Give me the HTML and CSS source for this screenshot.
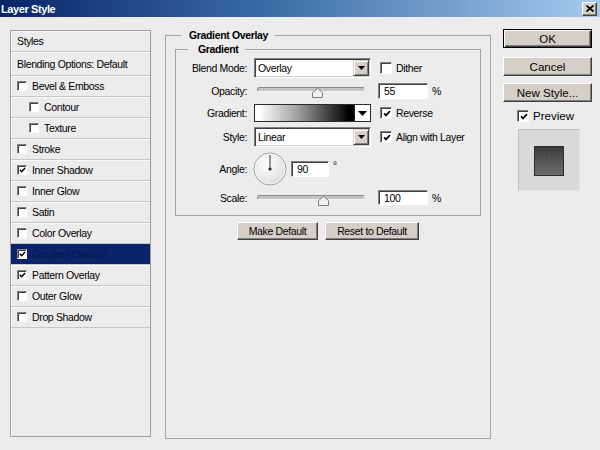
FILE: index.html
```html
<!DOCTYPE html>
<html>
<head>
<meta charset="utf-8">
<title>Layer Style</title>
<link rel="stylesheet" href="styles.css">
</head>
<body>
<div class="titlebar">
  <span class="title">Layer Style</span>
  <span class="close"><svg width="8" height="7" viewBox="0 0 8 7"><path d="M0.5 0.5 L7.5 6.5 M7.5 0.5 L0.5 6.5" stroke="#000" stroke-width="1.7"/></svg></span>
</div>
<div class="content">
  <div class="styles">
    <div class="row head">Styles</div>
    <div class="row blend">Blending Options: Default</div>
    <div class="row"><span class="cb"></span>Bevel &amp; Emboss</div>
    <div class="row sub"><span class="cb"></span>Contour</div>
    <div class="row sub"><span class="cb"></span>Texture</div>
    <div class="row"><span class="cb"></span>Stroke</div>
    <div class="row"><span class="cb"><svg class="tick" viewBox="0 0 8 8"><path d="M1 3.2 L3 5.4 L7 1.2"/></svg></span>Inner Shadow</div>
    <div class="row"><span class="cb"></span>Inner Glow</div>
    <div class="row"><span class="cb"></span>Satin</div>
    <div class="row"><span class="cb"></span>Color Overlay</div>
    <div class="row sel"><span class="cb"><svg class="tick" viewBox="0 0 8 8"><path d="M1 3.2 L3 5.4 L7 1.2"/></svg></span>Gradient Overlay</div>
    <div class="row"><span class="cb"><svg class="tick" viewBox="0 0 8 8"><path d="M1 3.2 L3 5.4 L7 1.2"/></svg></span>Pattern Overlay</div>
    <div class="row"><span class="cb"></span>Outer Glow</div>
    <div class="row"><span class="cb"></span>Drop Shadow</div>
  </div>

  <fieldset class="panel">
    <legend>Gradient Overlay</legend>
    <fieldset class="group">
      <legend>Gradient</legend>
      <div class="form">
        <div class="lbl">Blend Mode:</div>
        <div class="select"><span class="val">Overlay</span><span class="arrow"><svg width="7" height="4" viewBox="0 0 7 4"><path d="M0 0 H7 L3.5 4 Z" fill="#000"/></svg></span></div>
        <label class="check"><span class="cb big"></span>Dither</label>

        <div class="lbl">Opacity:</div>
        <div class="slider opacity"><div class="track"></div><svg class="thumb" width="11" height="10" viewBox="0 0 11 10"><path d="M5.5 0.5 L10.5 4.5 V9.5 H0.5 V4.5 Z" fill="#f2f2f2" stroke="#7c7c7c"/></svg></div>
        <div class="numwrap"><span class="input">55</span><span class="pct">%</span></div>

        <div class="lbl">Gradient:</div>
        <div class="gradient"><span class="ramp"></span><span class="garrow"><svg width="9" height="5" viewBox="0 0 9 5"><path d="M0 0 H9 L4.5 5 Z" fill="#000"/></svg></span></div>
        <label class="check"><span class="cb big"><svg class="tick" viewBox="0 0 8 8"><path d="M1 3.2 L3 5.4 L7 1.2"/></svg></span>Reverse</label>

        <div class="lbl">Style:</div>
        <div class="select"><span class="val">Linear</span><span class="arrow"><svg width="7" height="4" viewBox="0 0 7 4"><path d="M0 0 H7 L3.5 4 Z" fill="#000"/></svg></span></div>
        <label class="check"><span class="cb big"><svg class="tick" viewBox="0 0 8 8"><path d="M1 3.2 L3 5.4 L7 1.2"/></svg></span>Align with Layer</label>

        <div class="lbl">Angle:</div>
        <div class="angle">
          <svg class="dial" width="34" height="34" viewBox="0 0 34 34">
            <defs><radialGradient id="dg" cx="0.4" cy="0.35" r="0.7"><stop offset="0" stop-color="#ffffff"/><stop offset="1" stop-color="#dcdcdc"/></radialGradient></defs>
            <circle cx="17" cy="17" r="16" fill="url(#dg)" stroke="#9c9c9c"/>
            <circle cx="17" cy="17" r="15" fill="none" stroke="#ffffff" stroke-opacity="0.7"/>
            <path d="M17 3 V17" stroke="#333" stroke-width="1"/>
            <circle cx="17" cy="17" r="1.6" fill="#222"/>
          </svg>
          <span class="input small">90</span><span class="deg">°</span>
        </div>
        <div></div>

        <div class="lbl">Scale:</div>
        <div class="slider scale"><div class="track"></div><svg class="thumb" width="11" height="10" viewBox="0 0 11 10"><path d="M5.5 0.5 L10.5 4.5 V9.5 H0.5 V4.5 Z" fill="#f2f2f2" stroke="#7c7c7c"/></svg></div>
        <div class="numwrap"><span class="input">100</span><span class="pct">%</span></div>
      </div>
    </fieldset>
    <div class="btnrow">
      <button class="btn w81">Make Default</button>
      <button class="btn w94">Reset to Default</button>
    </div>
  </fieldset>

  <div class="side">
    <button class="btn big default">OK</button>
    <button class="btn big cancel">Cancel</button>
    <button class="btn big">New Style...</button>
    <label class="preview-check"><span class="cb big"><svg class="tick" viewBox="0 0 8 8"><path d="M1 3.2 L3 5.4 L7 1.2"/></svg></span>Preview</label>
    <div class="preview"><div class="swatch"></div></div>
  </div>
</div>
</body>
</html>
```
FILE: styles.css
```css
* { box-sizing: border-box; }
html, body { margin: 0; padding: 0; }
body {
  width: 600px;
  height: 450px;
  overflow: hidden;
  background: #ececec;
  font-family: "Liberation Sans", Arial, sans-serif;
  font-size: 10.5px;
  letter-spacing: -0.35px;
  color: #000;
}

/* title bar */
.titlebar {
  height: 17px;
  background: linear-gradient(to right, #0a246a, #3a6ea5 45%, #a6caf0);
  display: flex;
  align-items: center;
  justify-content: space-between;
  padding: 0 3px 0 1px;
}
.title {
  color: #fff;
  font-weight: bold;
  font-size: 11px;
  letter-spacing: -0.4px;
}
.close {
  width: 15px;
  height: 14px;
  background: #d4d0c8;
  border: 1px solid;
  border-color: #fff #404040 #404040 #fff;
  box-shadow: inset -1px -1px 0 #808080;
  display: flex;
  align-items: center;
  justify-content: center;
}

.content {
  display: flex;
  align-items: flex-start;
  padding: 12px 0 0 10px;
}

/* styles list */
.styles {
  width: 141px;
  height: 407px;
  margin-top: 1px;
  border: 1px solid #9d9d9d;
  box-shadow: inset 1px 1px 0 #fff;
}
.row {
  height: 21px;
  display: flex;
  align-items: center;
  padding-left: 6px;
  border-bottom: 1px solid #c6c6c6;
  box-shadow: inset 0 1px 0 #fafafa;
}
.row.blend { height: 24px; }
.row.sub { padding-left: 18px; }
.row .cb { margin-right: 5px; }
.row.sel {
  background: #0a246a;
  color: #051648;
  box-shadow: none;
}

/* checkbox */
.cb {
  width: 10px;
  height: 10px;
  flex: none;
  background: #fff;
  border: 1px solid;
  border-color: #808080 #fff #fff #808080;
  box-shadow: inset 1px 1px 0 #404040;
  display: inline-flex;
  align-items: center;
  justify-content: center;
}
.cb.big { width: 12px; height: 12px; }
.tick {
  width: 7px;
  height: 7px;
  margin: 1px 0 0 1px;
  fill: none;
  stroke: #000;
  stroke-width: 1.7;
}
.cb.big .tick { width: 8px; height: 8px; }

/* fieldsets */
.panel {
  width: 326px;
  height: 410px;
  margin: 0 0 0 14px;
  padding: 1px 9px 0 9px;
  border: 1px solid #a3a3a3;
  min-width: 0;
}
.panel > legend {
  font-weight: bold;
  line-height: 13px;
  padding: 0 7px 0 8px;
  margin-left: 6px;
}
.group {
  margin: 0;
  padding: 2px 0 10px 0;
  border: 1px solid #a3a3a3;
  min-width: 0;
}
.group > legend {
  font-weight: bold;
  line-height: 13px;
  padding: 0 7px 0 10px;
  margin-left: 12px;
}

.form {
  display: grid;
  grid-template-columns: 71px 117px 1fr;
  grid-template-rows: 20px 16px 18px 20px 33px 15px;
  column-gap: 7px;
  row-gap: 5px;
  align-items: center;
}
.lbl { text-align: right; }

.select {
  height: 20px;
  display: flex;
  background: #fff;
  border: 1px solid;
  border-color: #808080 #fff #fff #808080;
  padding: 1px 1px 1px 1px;
  box-shadow: inset 1px 1px 0 #404040, inset -1px -1px 0 #d4d0c8;
}
.select .val {
  flex: 1;
  padding-left: 2px;
  line-height: 16px;
}
.select .arrow {
  width: 16px;
  height: 16px;
  background: #d4d0c8;
  border: 1px solid;
  border-color: #d4d0c8 #404040 #404040 #d4d0c8;
  box-shadow: inset 1px 1px 0 #fff, inset -1px -1px 0 #808080;
  display: flex;
  align-items: center;
  justify-content: center;
}

.check {
  display: flex;
  align-items: center;
  margin-left: 2px;
}
.check .cb { margin-right: 4px; }

.slider {
  position: relative;
  height: 100%;
}
.track {
  width: 108px;
  height: 5px;
  margin: 4px 0 0 3px;
  border-radius: 3px;
  background: #c4c4c4;
  border: 1px solid;
  border-color: #8a8a8a #e0e0e0 #f4f4f4 #8a8a8a;
}
.thumb {
  position: absolute;
  top: 5px;
  left: 58px;
}
.scale .track { margin-top: 5px; }
.scale .thumb { top: 6px; left: 64px; }

.numwrap {
  display: flex;
  align-items: center;
}
.input {
  width: 50px;
  height: 16px;
  background: #fff;
  border: 1px solid;
  border-color: #808080 #fff #fff #808080;
  box-shadow: inset 1px 1px 0 #404040;
  padding-left: 5px;
  line-height: 14px;
}
.input.small { width: 38px; margin-left: 4px; }
.pct { margin-left: 4px; }
.scale + .numwrap .input { height: 15px; }

.gradient {
  height: 18px;
  display: flex;
}
.ramp {
  width: 101px;
  height: 18px;
  border: 1px solid #2a2a2a;
  background: linear-gradient(to right, #fff 4%, #9a9a9a 45%, #000 95%);
}
.garrow {
  width: 16px;
  height: 18px;
  border: 1px solid #2a2a2a;
  border-left: none;
  background: #fff;
  display: flex;
  align-items: center;
  justify-content: center;
}

.angle {
  display: flex;
  align-items: center;
  height: 34px;
}
.dial { flex: none; margin-left: -1px; }
.deg {
  margin-left: 4px;
  align-self: flex-start;
  margin-top: 8px;
  font-size: 10px;
}

/* buttons */
.btn {
  font: inherit;
  letter-spacing: inherit;
  color: #000;
  height: 18px;
  padding: 0;
  background: #d4d0c8;
  border: 1px solid;
  border-color: #fff #404040 #404040 #fff;
  box-shadow: inset -1px -1px 0 #808080;
}
.w81 { width: 81px; }
.w94 { width: 94px; }
.btnrow {
  display: flex;
  justify-content: center;
  gap: 7px;
  margin-top: 6px;
}

.side {
  width: 89px;
  margin-left: 12px;
  display: flex;
  flex-direction: column;
  align-items: center;
}
.btn.big {
  width: 89px;
  height: 19px;
  font-size: 11.5px;
  letter-spacing: 0;
}
.btn.default {
  border: 1px solid #000;
  box-shadow: inset 1px 1px 0 #fff, inset -1px -1px 0 #404040, inset -2px -2px 0 #808080;
  margin-bottom: 9px;
}
.btn.cancel { margin-bottom: 7px; }
.preview-check {
  display: flex;
  align-items: center;
  margin-top: 8px;
  font-size: 11.5px;
  letter-spacing: 0;
  margin-left: -4px;
}
.preview-check .cb { margin-right: 4px; }
.preview {
  width: 62px;
  height: 62px;
  margin-top: 7px;
  margin-left: 2px;
  background: #d9d9d9;
  border: 1px solid;
  border-color: #c2c2c2 #e6e6e6 #e6e6e6 #c2c2c2;
  display: flex;
  align-items: center;
  justify-content: center;
}
.swatch {
  width: 30px;
  height: 30px;
  margin-top: 1px;
  border: 1px solid #2c2c2c;
  background:
    linear-gradient(to right, transparent 49%, rgba(255,255,255,0.04) 49%, rgba(255,255,255,0.04) 52%, transparent 52%),
    linear-gradient(to bottom, transparent 49%, rgba(255,255,255,0.04) 49%, rgba(255,255,255,0.04) 52%, transparent 52%),
    linear-gradient(to bottom, #3c3c3c, #6c6c6c);
}
```
